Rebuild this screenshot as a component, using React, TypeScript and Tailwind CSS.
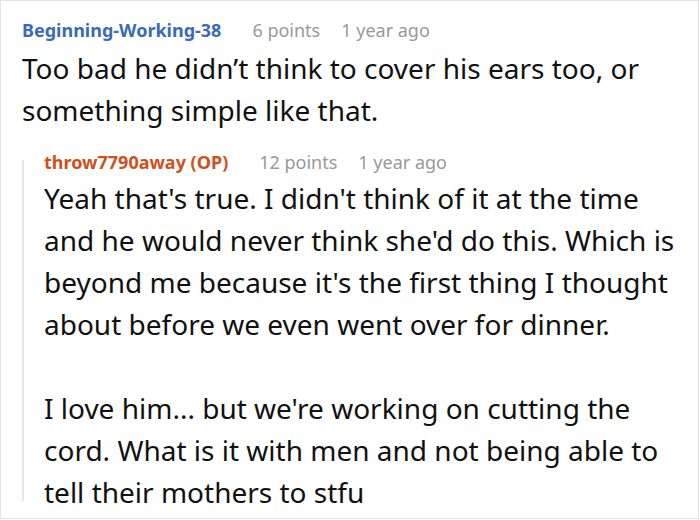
const font = { fontFamily: '"Noto Sans", "Open Sans", sans-serif' };

type MetaProps = { user: string; color: string; points: string; age: string };

const Meta = ({ user, color, points, age }: MetaProps) => (
  <div className="flex items-center h-[24px] text-[18px] leading-[24px]">
    <span className={`font-bold ${color}`}>{user}</span>
    <span className="ml-[31px] text-[#999999]">{points}</span>
    <span className="ml-[21px] text-[#999999]">{age}</span>
  </div>
);

export default function App() {
  return (
    <div
      className="w-[699px] h-[519px] border border-[#e3e3e3] bg-white overflow-hidden pl-[21px] pt-[17px] text-[#111111]"
      style={font}
    >
      <Meta user="Beginning-Working-38" color="text-[#3a6ab8]" points="6 points" age="1 year ago" />
      <div className="mt-[5px] text-[28px] leading-[42px]">
        <p>Too bad he didn’t think to cover his ears too, or</p>
        <p>something simple like that.</p>
      </div>

      <div className="flex mt-[19px]">
        <div className="w-[2px] bg-[#e6e6e6] mt-[10px] mb-[12px]" />
        <div className="ml-[20px]">
          <Meta user="throw7790away (OP)" color="text-[#d0501c]" points="12 points" age="1 year ago" />
          <div className="mt-[3px] text-[28px] leading-[42px]">
            <p>Yeah that's true. I didn't think of it at the time</p>
            <p>and he would never think she'd do this. Which is</p>
            <p>beyond me because it's the first thing I thought</p>
            <p>about before we even went over for dinner.</p>
            <p className="mt-[42px]">I love him... but we're working on cutting the</p>
            <p>cord. What is it with men and not being able to</p>
            <p>tell their mothers to stfu</p>
          </div>
        </div>
      </div>
    </div>
  );
}
